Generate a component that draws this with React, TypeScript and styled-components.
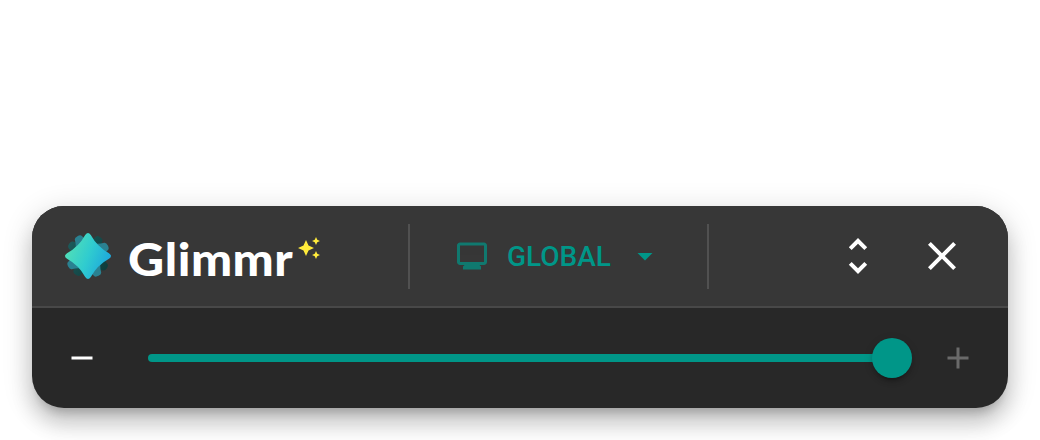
import React from 'react';
import styled, { createGlobalStyle } from 'styled-components';

const GlobalStyle = createGlobalStyle`
  body {
    margin: 0;
    background: #fff;
    font-family: Roboto, sans-serif;
  }
`;

const Page = styled.div`
  box-sizing: border-box;
  height: 440px;
  padding: 206px 32px 32px;
  overflow: hidden;
`;

const Panel = styled.div`
  border-radius: 32px;
  overflow: hidden;
  background: #282828;
  box-shadow:
    0 10px 10px -6px rgba(0, 0, 0, 0.2),
    0 16px 20px 2px rgba(0, 0, 0, 0.14),
    0 6px 28px 4px rgba(0, 0, 0, 0.12);
`;

const Header = styled.header`
  display: flex;
  align-items: center;
  height: 100px;
  border-bottom: 2px solid #484848;
  background: #373737;
`;

const Brand = styled.div`
  display: flex;
  align-items: center;
  width: 376px;
  padding-left: 32px;
  box-sizing: border-box;
`;

const BrandName = styled.span`
  width: 169px;
  margin-left: 16px;
  padding-top: 5px;
  color: #fff;
  font-family: Lato, sans-serif;
  font-size: 45px;
  font-weight: 900;
  line-height: 56px;
  letter-spacing: 0.5px;
  white-space: nowrap;
  transform: scaleX(1.085);
  transform-origin: left;

  &::first-letter {
    font-size: 46px;
  }
`;

const Divider = styled.div`
  width: 2px;
  height: 65px;
  margin-top: 1px;
  background: #515151;
`;

const ScopeButton = styled.button`
  display: flex;
  align-items: center;
  width: 297px;
  height: 72px;
  padding: 0 0 0 44px;
  border: 0;
  background: none;
  color: #009688;
  font: 500 28px/36px Roboto, sans-serif;
`;

const ScopeLabel = styled.span`
  width: 104px;
  margin: 0 16px 0 17px;
  padding-top: 2px;
  text-align: left;
  white-space: nowrap;
`;

const Actions = styled.div`
  display: flex;
  flex: 1;
  justify-content: flex-end;
  gap: 36px;
  padding-right: 42px;
`;

const IconButton = styled.button`
  display: flex;
  padding: 0;
  border: 0;
  background: none;
  color: #fff;

  &:disabled {
    color: #6a6a6a;
  }
`;

const Icon = styled.svg<{ $size: number; $color?: string; $opacity?: number }>`
  flex: none;
  width: ${({ $size }) => $size}px;
  height: ${({ $size }) => $size}px;
  fill: ${({ $color }) => $color || 'currentColor'};
  opacity: ${({ $opacity }) => $opacity ?? 1};
`;

const Sparkles = styled(Icon)`
  align-self: flex-start;
  margin-top: 10.5px;
`;

const Controls = styled.div`
  display: flex;
  align-items: center;
  height: 100px;
  padding: 0 32px;
`;

const Slider = styled.div`
  display: flex;
  align-items: center;
  width: 764px;
  margin: 0 28px 0 48px;
`;

const Track = styled.div`
  height: 8px;
  flex: 1;
  border-radius: 4px 0 0 4px;
  background: #009688;
`;

const Thumb = styled.div`
  width: 40px;
  height: 40px;
  margin-left: -2px;
  border-radius: 50%;
  background: #009688;
  box-shadow:
    0 6px 2px -4px rgba(0, 0, 0, 0.2),
    0 4px 4px rgba(0, 0, 0, 0.14),
    0 2px 10px rgba(0, 0, 0, 0.12);
`;

const paths = {
  monitor:
    'M20 3H4c-1.1 0-2 .9-2 2v11c0 1.1.9 2 2 2h3l-1 1v2h12v-2l-1-1h3c1.1 0 2-.9 2-2V5c0-1.1-.9-2-2-2zm0 13H4V5h16v11z',
  caret: 'M7 10l5 5 5-5z',
  unfold:
    'M12 5.83 15.17 9l1.41-1.41L12 3 7.41 7.59 8.83 9 12 5.83zm0 12.34L8.83 15l-1.41 1.41L12 21l4.59-4.59L15.17 15 12 18.17z',
  close:
    'M19 6.41 17.59 5 12 10.59 6.41 5 5 6.41 10.59 12 5 17.59 6.41 19 12 13.41 17.59 19 19 17.59 13.41 12z',
  minus: 'M19 13H5v-2h14v2z',
  plus: 'M19 13h-6v6h-2v-6H5v-2h6V5h2v6h6v2z',
  sparkles:
    'M19 9l1.25-2.75L23 5l-2.75-1.25L19 1l-1.25 2.75L15 5l2.75 1.25L19 9zm-7.5.5L9 4 6.5 9.5 1 12l5.5 2.5L9 20l2.5-5.5L17 12l-5.5-2.5zM19 15l-1.25 2.75L15 19l2.75 1.25L19 23l1.25-2.75L23 19l-2.75-1.25L19 15z',
};

const star =
  'M-2.8 -21Q0 -25 2.8 -21Q9.2 -9.2 21 -2.8Q25 0 21 2.8Q9.2 9.2 2.8 21Q0 25 -2.8 21Q-9.2 9.2 -21 2.8Q-25 0 -21 -2.8Q-9.2 -9.2 -2.8 -21Z';

const Logo = () => (
  <svg width="48" height="48" viewBox="-24 -24 48 48">
    <defs>
      <linearGradient id="shine" x1="0" y1="0.3" x2="1" y2="0.7">
        <stop offset="0" stopColor="#54e0b5" />
        <stop offset="0.5" stopColor="#30cccf" />
        <stop offset="1" stopColor="#1ba3df" />
      </linearGradient>
      <linearGradient id="shade" x1="0" y1="0" x2="1" y2="0">
        <stop offset="0" stopColor="#1c5a5a" />
        <stop offset="1" stopColor="#0e3c3b" />
      </linearGradient>
      {/* blunter tips, so they show behind the front star */}
      <path
        id="back"
        d="M-4 -20.5Q-3.4 -22.5 0 -22.5Q3.4 -22.5 4 -20.5Q7 -7 20.5 -4Q22.5 -3.4 22.5 0Q22.5 3.4 20.5 4Q7 7 4 20.5Q3.4 22.5 0 22.5Q-3.4 22.5 -4 20.5Q-7 7 -20.5 4Q-22.5 3.4 -22.5 0Q-22.5 -3.4 -20.5 -4Q-7 -7 -4 -20.5Z"
      />
    </defs>
    <use href="#back" fill="url(#shade)" transform="rotate(33)" />
    <use href="#back" fill="#2a8191" transform="rotate(-28)" />
    <path d={star} fill="url(#shine)" />
  </svg>
);

const App = () => (
  <>
    <GlobalStyle />
    <Page>
      <Panel>
        <Header>
          <Brand>
            <Logo />
            <BrandName>Glimmr</BrandName>
            <Sparkles $size={24} $color="#ffeb3b" viewBox="0 0 24 24">
              <path d={paths.sparkles} />
            </Sparkles>
          </Brand>
          <Divider />
          <ScopeButton>
            <Icon $size={36} $opacity={0.7} viewBox="0 0 24 24">
              <path d={paths.monitor} />
            </Icon>
            <ScopeLabel>GLOBAL</ScopeLabel>
            <Icon $size={36} viewBox="0 0 24 24">
              <path d={paths.caret} />
            </Icon>
          </ScopeButton>
          <Divider />
          <Actions>
            <IconButton aria-label="Expand">
              <Icon $size={48} viewBox="0 0 24 24">
                <path d={paths.unfold} />
              </Icon>
            </IconButton>
            <IconButton aria-label="Close">
              <Icon $size={48} viewBox="0 0 24 24">
                <path d={paths.close} />
              </Icon>
            </IconButton>
          </Actions>
        </Header>

        {/* Brightness */}
        <Controls>
          <IconButton aria-label="Decrease">
            <Icon $size={36} viewBox="0 0 24 24">
              <path d={paths.minus} />
            </Icon>
          </IconButton>
          <Slider>
            <Track />
            <Thumb />
          </Slider>
          <IconButton aria-label="Increase" disabled>
            <Icon $size={36} viewBox="0 0 24 24">
              <path d={paths.plus} />
            </Icon>
          </IconButton>
        </Controls>
      </Panel>
    </Page>
  </>
);

export default App;
